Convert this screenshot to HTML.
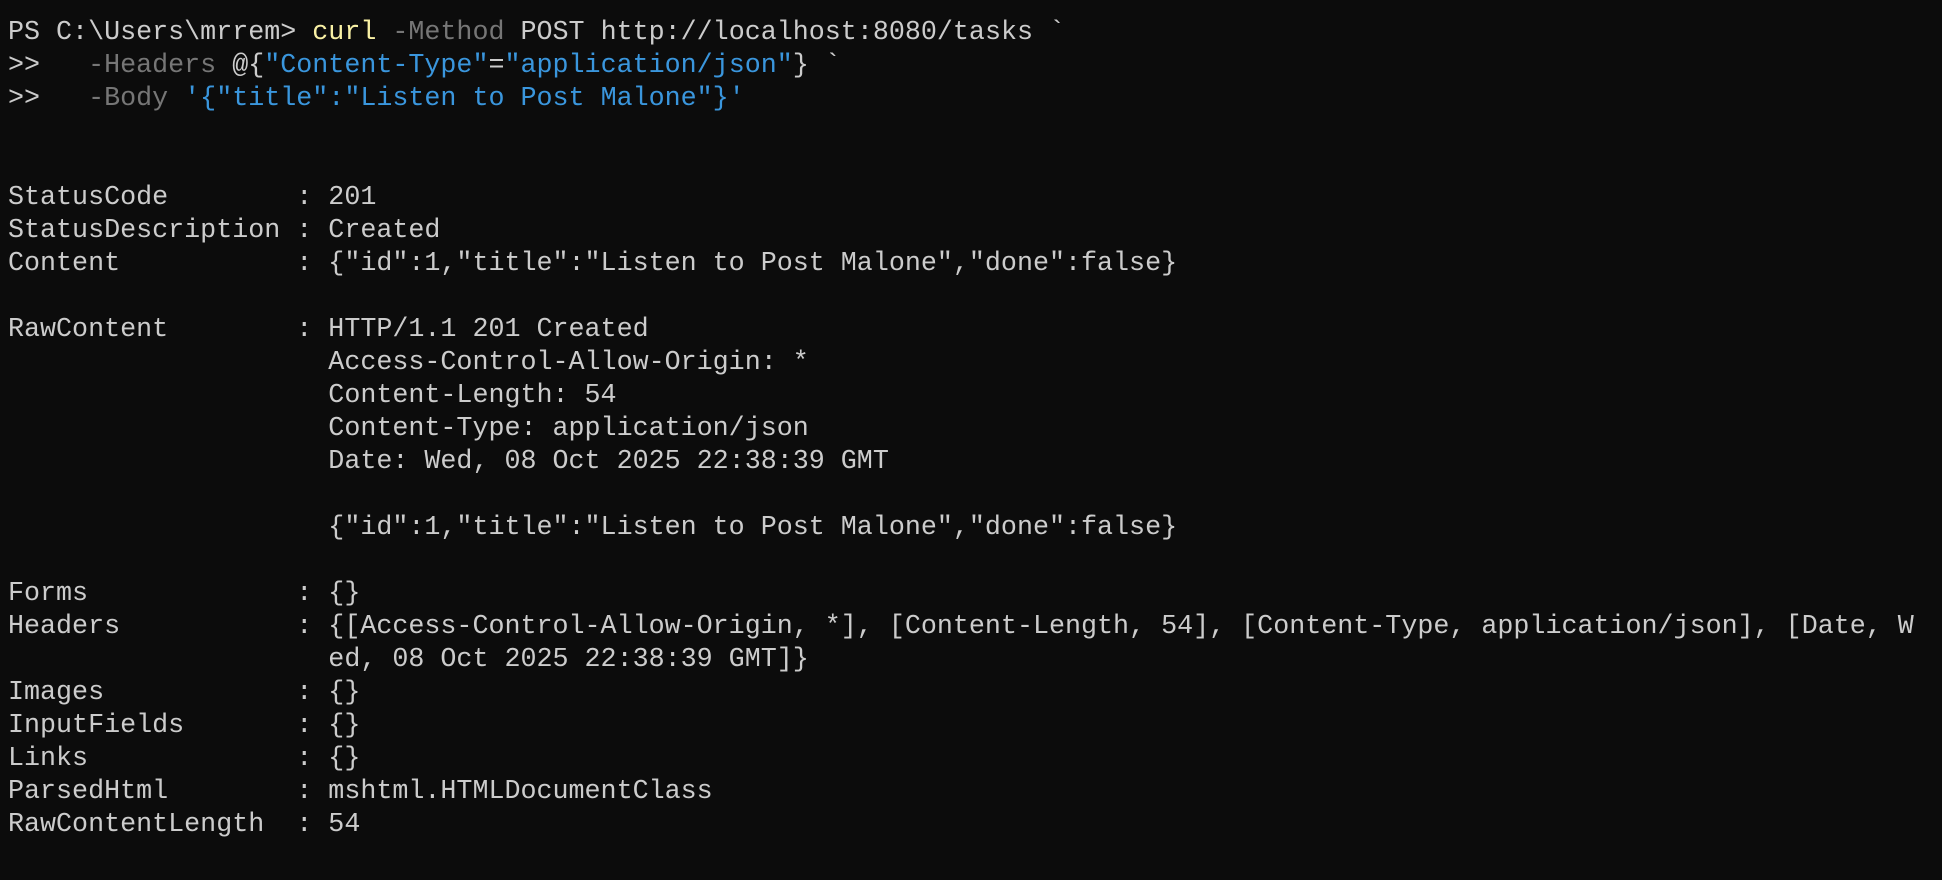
<!DOCTYPE html>
<html><head><meta charset="utf-8"><style>
html,body{margin:0;padding:0;background:#0c0c0c;width:1942px;height:880px;overflow:hidden}
pre{margin:0;padding:17px 0 0 8px;font-family:"Liberation Mono","DejaVu Sans Mono",monospace;font-size:26.7px;line-height:33px;color:#cccccc;white-space:pre}
.y{color:#f9f1a5}.g{color:#767676}.b{color:#3a96dd}
</style></head><body><pre>PS C:\Users\mrrem&gt; <span class="y">curl</span> <span class="g">-Method</span> POST http://localhost:8080/tasks `
&gt;&gt;   <span class="g">-Headers</span> @{<span class="b">"Content-Type"</span>=<span class="b">"application/json"</span>} `
&gt;&gt;   <span class="g">-Body</span> <span class="b">'{"title":"Listen to Post Malone"}'</span>


StatusCode        : 201
StatusDescription : Created
Content           : {"id":1,"title":"Listen to Post Malone","done":false}

RawContent        : HTTP/1.1 201 Created
                    Access-Control-Allow-Origin: *
                    Content-Length: 54
                    Content-Type: application/json
                    Date: Wed, 08 Oct 2025 22:38:39 GMT

                    {"id":1,"title":"Listen to Post Malone","done":false}

Forms             : {}
Headers           : {[Access-Control-Allow-Origin, *], [Content-Length, 54], [Content-Type, application/json], [Date, W
                    ed, 08 Oct 2025 22:38:39 GMT]}
Images            : {}
InputFields       : {}
Links             : {}
ParsedHtml        : mshtml.HTMLDocumentClass
RawContentLength  : 54
</pre></body></html>
